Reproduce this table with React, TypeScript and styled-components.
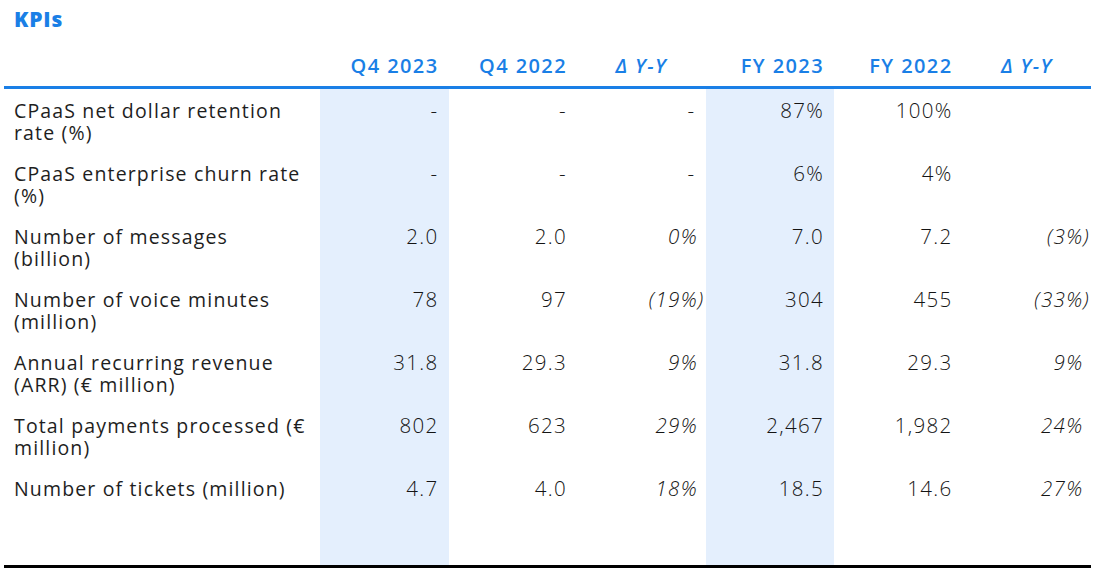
import React from "react";
import styled, { createGlobalStyle } from "styled-components";

const Colors = {
  BLUE: "#1a7fe6",
  HIGHLIGHT: "#e4effd",
  TEXT: "#1e1e1e",
  BLACK: "#000000",
};

type Row = {
  label: string[];
  values: (string | null)[];
};

const ROWS: Row[] = [
  {
    label: ["CPaaS net dollar retention", "rate (%)"],
    values: ["-", "-", "-", "87%", "100%", null],
  },
  {
    label: ["CPaaS enterprise churn rate", "(%)"],
    values: ["-", "-", "-", "6%", "4%", null],
  },
  {
    label: ["Number of messages", "(billion)"],
    values: ["2.0", "2.0", "0%", "7.0", "7.2", "(3%)"],
  },
  {
    label: ["Number of voice minutes", "(million)"],
    values: ["78", "97", "(19%)", "304", "455", "(33%)"],
  },
  {
    label: ["Annual recurring revenue", "(ARR) (€ million)"],
    values: ["31.8", "29.3", "9%", "31.8", "29.3", "9%"],
  },
  {
    label: ["Total payments processed (€", "million)"],
    values: ["802", "623", "29%", "2,467", "1,982", "24%"],
  },
  {
    label: ["Number of tickets (million)"],
    values: ["4.7", "4.0", "18%", "18.5", "14.6", "27%"],
  },
];

const HEADERS = ["Q4 2023", "Q4 2022", "Δ Y-Y", "FY 2023", "FY 2022", "Δ Y-Y"];
const HIGHLIGHT = [0, 3];
const DELTA = [2, 5];

const App = () => {
  const renderValue = (value: string | null, col: number) => {
    if (value === null) return null;
    if (!DELTA.includes(col) || value === "-") return value;
    // keep positives aligned with the digits of "(19%)" style negatives
    return value.startsWith("(") ? (
      value
    ) : (
      <>
        {value}
        <Ghost>)</Ghost>
      </>
    );
  };

  return (
    <Page>
      <GlobalStyle />
      <Title>KPIs</Title>
      <Table>
        <colgroup>
          <col style={{ width: 316 }} />
          {HEADERS.map((_, i) => (
            <col key={i} style={{ width: 128.5 }} />
          ))}
        </colgroup>
        <thead>
          <tr>
            <HeadCell />
            {HEADERS.map((h, i) => (
              <HeadCell key={i} $delta={DELTA.includes(i)}>
                {h}
              </HeadCell>
            ))}
          </tr>
        </thead>
        <tbody>
          {ROWS.map((row, r) => (
            <tr key={r}>
              <LabelCell>
                {row.label.map((line, i) => (
                  <React.Fragment key={i}>
                    {i > 0 && <br />}
                    {line}
                  </React.Fragment>
                ))}
              </LabelCell>
              {row.values.map((v, c) => (
                <ValueCell
                  key={c}
                  $highlight={HIGHLIGHT.includes(c)}
                  $delta={DELTA.includes(c) && v !== "-"}
                >
                  {renderValue(v, c)}
                </ValueCell>
              ))}
            </tr>
          ))}
          <tr>
            <SpacerCell />
            {HEADERS.map((_, c) => (
              <SpacerCell key={c} $highlight={HIGHLIGHT.includes(c)} />
            ))}
          </tr>
        </tbody>
      </Table>
    </Page>
  );
};

const GlobalStyle = createGlobalStyle`
  body {
    margin: 0;
    background: #ffffff;
    font-family: "Open Sans", Lato, sans-serif;
    color: ${Colors.TEXT};
  }
`;

const Page = styled.div`
  width: 1103px;
  height: 585px;
  padding-left: 4px;
  box-sizing: border-box;
`;

const Title = styled.h1`
  margin: 0;
  padding-left: 10px;
  height: 38px;
  line-height: 38px;
  font-size: 21px;
  font-weight: 800;
  letter-spacing: 0.8px;
  color: ${Colors.BLUE};
`;

const Table = styled.table`
  table-layout: fixed;
  width: 1087px;
  border-collapse: separate;
  border-spacing: 0;
`;

const HeadCell = styled.th<{ $delta?: boolean }>`
  height: 51px;
  padding: 0 10px 9px 0;
  box-sizing: border-box;
  vertical-align: bottom;
  text-align: ${({ $delta }) => ($delta ? "center" : "right")};
  ${({ $delta }) => $delta && `padding-right: 0; font-style: italic;`}
  font-size: 20px;
  line-height: 22px;
  font-weight: 600;
  letter-spacing: 1.4px;
  color: ${Colors.BLUE};
  border-bottom: 3px solid ${Colors.BLUE};
  white-space: nowrap;
`;

const LabelCell = styled.td`
  height: 63px;
  padding: 11px 0 0 10px;
  box-sizing: border-box;
  vertical-align: top;
  font-size: 19.5px;
  line-height: 22px;
  letter-spacing: 1.15px;
  white-space: nowrap;
`;

const ValueCell = styled.td<{ $highlight?: boolean; $delta?: boolean }>`
  height: 63px;
  padding: 10px ${({ $delta }) => ($delta ? "1px" : "10px")} 0 0;
  box-sizing: border-box;
  vertical-align: top;
  text-align: right;
  font-size: 20.5px;
  line-height: 22px;
  font-weight: 300;
  letter-spacing: 1.3px;
  color: #141414;
  font-style: ${({ $delta }) => ($delta ? "italic" : "normal")};
  background: ${({ $highlight }) =>
    $highlight ? Colors.HIGHLIGHT : "transparent"};
  white-space: nowrap;
`;

const SpacerCell = styled.td<{ $highlight?: boolean }>`
  height: 38px;
  padding: 0;
  box-sizing: border-box;
  background: ${({ $highlight }) =>
    $highlight ? Colors.HIGHLIGHT : "transparent"};
  border-bottom: 3px solid ${Colors.BLACK};
`;

const Ghost = styled.span`
  visibility: hidden;
`;

export default App;
